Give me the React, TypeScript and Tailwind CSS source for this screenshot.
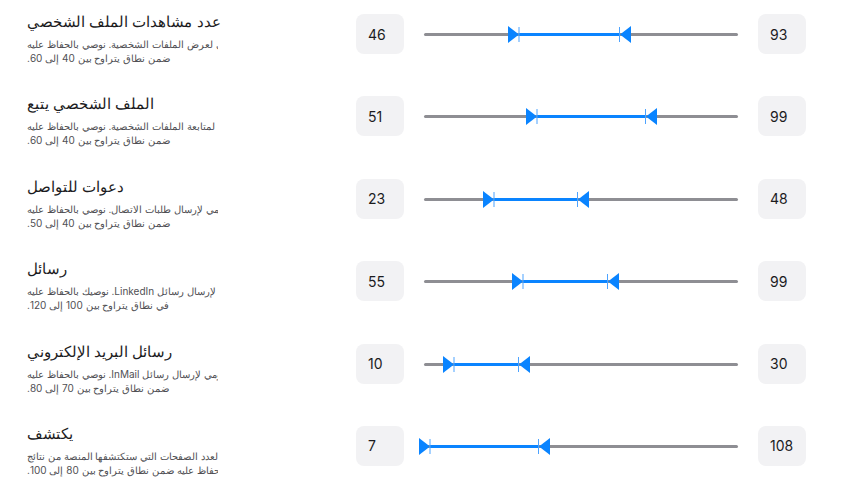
import React from "react";

type Row = {
  title: string;
  line1: string;
  line2: string;
  min: string;
  max: string;
  lo: number;
  hi: number;
};

const rows: Row[] = [
  {
    title: "عدد مشاهدات الملف الشخصي",
    line1: "اضبط الحد اليومي لعرض الملفات الشخصية. نوصي بالحفاظ عليه",
    line2: "ضمن نطاق يتراوح بين 40 إلى 60.",
    min: "46",
    max: "93",
    lo: 95,
    hi: 195,
  },
  {
    title: "الملف الشخصي يتبع",
    line1: "حدد الحد اليومي لمتابعة الملفات الشخصية. نوصي بالحفاظ عليه",
    line2: "ضمن نطاق يتراوح بين 40 إلى 60.",
    min: "51",
    max: "99",
    lo: 113,
    hi: 221,
  },
  {
    title: "دعوات للتواصل",
    line1: "قم بتغيير الحد اليومي لإرسال طلبات الاتصال. نوصي بالحفاظ عليه",
    line2: "ضمن نطاق يتراوح بين 40 إلى 50.",
    min: "23",
    max: "48",
    lo: 70,
    hi: 153,
  },
  {
    title: "رسائل",
    line1: "اضبط الحد اليومي لإرسال رسائل LinkedIn. نوصيك بالحفاظ عليه",
    line2: "في نطاق يتراوح بين 100 إلى 120.",
    min: "55",
    max: "99",
    lo: 99,
    hi: 183,
  },
  {
    title: "رسائل البريد الإلكتروني",
    line1: "قم بتغيير الحد اليومي لإرسال رسائل InMail. نوصي بالحفاظ عليه",
    line2: "ضمن نطاق يتراوح بين 70 إلى 80.",
    min: "10",
    max: "30",
    lo: 30,
    hi: 94,
  },
  {
    title: "يكتشف",
    line1: "حدد الحد اليومي لعدد الصفحات التي ستكتشفها المنصة من نتائج",
    line2: "البحث. نوصي بالحفاظ عليه ضمن نطاق يتراوح بين 80 إلى 100.",
    min: "7",
    max: "108",
    lo: 6,
    hi: 114,
  },
];

function Slider({ lo, hi }: { lo: number; hi: number }) {
  return (
    <div className="relative w-[314px] h-[40px]">
      <div className="absolute left-0 right-0 top-[19px] h-[3px] bg-[#8e8e93] rounded-full" />
      <div className="absolute top-[19px] h-[3px] bg-[#0a84ff]" style={{ left: lo, width: hi - lo }} />
      <svg className="absolute top-[12px]" style={{ left: lo - 11 }} width="12" height="17" viewBox="0 0 12 17">
        <polygon points="0,0 11,8.5 0,17" fill="#0a84ff" />
        <rect x="10.5" y="1" width="1" height="15" fill="#4da3ff" />
      </svg>
      <svg className="absolute top-[12px]" style={{ left: hi }} width="12" height="17" viewBox="0 0 12 17">
        <polygon points="12,0 1,8.5 12,17" fill="#0a84ff" />
        <rect x="0" y="1" width="1" height="15" fill="#4da3ff" />
      </svg>
    </div>
  );
}

function NumBox({ v }: { v: string }) {
  return (
    <div className="w-[48px] h-[40px] rounded-[8px] bg-[#f2f2f4] flex items-center pl-[12px] text-[14px] text-[#1c1c1e]">
      {v}
    </div>
  );
}

export default function App() {
  return (
    <div className="w-[850px] h-[492px] bg-white pt-[14px] pl-[27px] font-[Inter,sans-serif]">
      {rows.map((r, i) => (
        <div key={i} className="flex items-start h-[82.4px]">
          <div className="w-[329px]">
            <div dir="rtl" className="text-left text-[15px] leading-[16px] text-[#1c1c1e]">
              {r.title}
            </div>
            <div dir="ltr" className="mt-[7px] w-[191px] overflow-hidden text-[10px] leading-[14px] text-[#505054]">
              <div dir="rtl" className="w-max whitespace-nowrap">{r.line1}</div>
              <div dir="rtl" className="w-max whitespace-nowrap">{r.line2}</div>
            </div>
          </div>
          <div className="flex items-start gap-[20px]">
            <NumBox v={r.min} />
            <Slider lo={r.lo} hi={r.hi} />
            <NumBox v={r.max} />
          </div>
        </div>
      ))}
    </div>
  );
}
